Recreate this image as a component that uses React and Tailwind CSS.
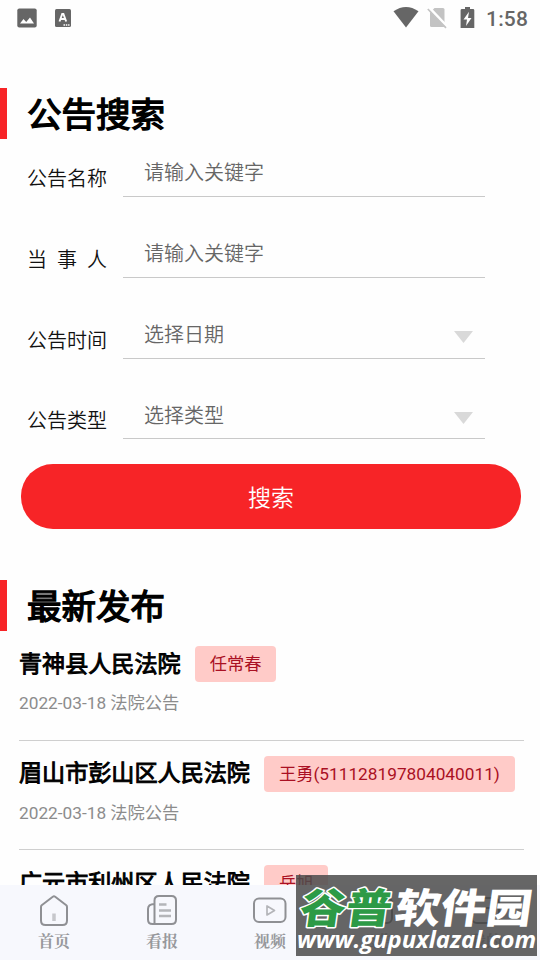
import React from 'react';

const fields = [
  { id: 'name', label: ['公告名称'], placeholder: '请输入关键字', height: 'h-[58px]', pad: 'pt-[2px]', select: false },
  { id: 'party', label: ['当', '事', '人'], placeholder: '请输入关键字', height: 'h-[81px]', pad: 'pt-[2px]', select: false },
  { id: 'time', label: ['公告时间'], placeholder: '选择日期', height: 'h-[81px]', pad: 'pt-[2px]', select: true },
  { id: 'type', label: ['公告类型'], placeholder: '选择类型', height: 'h-[80px]', pad: 'pt-[4px]', select: true },
];

const notices = [
  { court: '青神县人民法院', person: '任常春', date: '2022-03-18' },
  { court: '眉山市彭山区人民法院', person: '王勇(511128197804040011)', date: '2022-03-18' },
  { court: '广元市利州区人民法院', person: '岳旭', date: '2022-03-18' },
];

const HomeIcon = () => (
  <svg width="36" height="36" viewBox="0 0 36 36" fill="none" stroke="#8f9094" strokeWidth="2" strokeLinejoin="round">
    <path d="M16.8 3.800 5.700 12.200Q5 12.800 5 14v13.500Q5 32 9.500 32h17Q31 32 31 27.500V14q0-1.200-.7-1.800L19.200 3.800Q18 2.900 16.800 3.800Z" />
    <path d="M18 20.500V28" stroke="#c6c7cb" strokeWidth="3.500" />
  </svg>
);

const PaperIcon = () => (
  <svg width="36" height="36" viewBox="0 0 36 36" fill="none" stroke="#8f9094" strokeWidth="2">
    <path d="M10.500 31V7.500Q10.500 3 15 3h12.500Q32 3 32 7.500v19Q32 31 27.500 31H8.500Q4 31 4 26.500V16Q4 11 10.500 11" />
    <path d="M15 11.500h7.500M15 17.500h12M15 23h12" stroke="#b4b5b9" strokeWidth="2.300" />
  </svg>
);

const VideoIcon = () => (
  <svg width="36" height="36" viewBox="0 0 36 36" fill="none" stroke="#8f9094" strokeWidth="2">
    <rect x="2" y="5.500" width="31.500" height="23.500" rx="5" />
    <path d="M15 13v9l7.500-4.500z" stroke="#b4b5b9" strokeWidth="1.700" strokeLinejoin="round" />
  </svg>
);

const NoticeIcon = () => (
  <svg width="36" height="36" viewBox="0 0 36 36" fill="none" stroke="#55565a" strokeWidth="2">
    <rect x="5" y="5" width="27" height="25" rx="5" />
    <path d="M12 12h11M12 19h11" stroke="#e8332a" strokeWidth="2.500" />
  </svg>
);

const MineIcon = () => (
  <svg width="36" height="36" viewBox="0 0 36 36" fill="none" stroke="#55565a" strokeWidth="2">
    <rect x="4" y="5" width="27" height="25" rx="5" />
    <path d="M13 15h11" />
  </svg>
);

const tabs = [
  { id: 'home', label: '首页', icon: HomeIcon },
  { id: 'paper', label: '看报', icon: PaperIcon },
  { id: 'video', label: '视频', icon: VideoIcon },
  { id: 'notice', label: '公告', icon: NoticeIcon },
  { id: 'mine', label: '我的', icon: MineIcon },
];

const StatusBar = () => (
  <div className="flex h-9 shrink-0 items-center pl-[17px] pr-[12px] text-[#666]">
    <svg width="20" height="20" viewBox="0 0 20 20">
      <rect x=".3" y=".5" width="19.400" height="19" rx="2" fill="#666" />
      <path d="M3 15.500 6.500 11l2.700 3L13 9.500l4 6z" fill="#fff" />
    </svg>
    <svg className="ml-[18px]" width="16" height="18" viewBox="0 0 16 18">
      <rect width="16" height="18" rx="1.500" fill="#666" />
      <path d="M4.500 12.500 7.200 5h1.200l2.800 7.500M5.800 10h4" fill="none" stroke="#fff" strokeWidth="1.900" />
      <path d="M8.500 16h6" stroke="#fff" strokeWidth="1.300" strokeDasharray="1.500 .8" />
    </svg>
    <svg className="mb-[2px] ml-auto" width="26" height="22" viewBox="0 0 26 22">
      <path d="M.5 5.300Q13-3.300 25.500 5.300L13 21.500z" fill="#666" />
    </svg>
    <svg className="ml-[8px]" width="21" height="22" viewBox="0 0 21 22">
      <path d="M7.500 1H16q1.500 0 1.500 1.500V20H4.500Q3 20 3 18.500V5.500z" fill="#c3c3c3" />
      <path d="M1.500.5 20 20" stroke="#fff" strokeWidth="3.500" />
      <path d="M.8 2 19 20.800" stroke="#c3c3c3" strokeWidth="1.700" />
    </svg>
    <svg className="mb-[2px] ml-[12px]" width="15" height="23" viewBox="0 0 15 23">
      <path d="M5 1h5v2h3q1.300 0 1.300 1.300V22H.6V4.300Q.6 3 2 3h3z" fill="#666" />
      <path d="M9 5.800 3.500 13.500H7L6 20l5.500-8H8z" fill="#fff" />
    </svg>
    <span className="ml-[11px] w-[42px] whitespace-nowrap pt-[2px] text-[21px] font-medium leading-none tracking-[0.2px]">1:58</span>
  </div>
);

const SectionTitle = ({ children }) => (
  <div className="flex h-[51px] shrink-0 items-center">
    <div className="h-full w-[7px] bg-[#f72427]" />
    <h2 className="ml-5 pt-[4px] text-[34.5px] font-normal leading-none text-black [-webkit-text-stroke:1.4px_#000]">{children}</h2>
  </div>
);

const Field = ({ field }) => (
  <div className={`flex items-end pl-[27px] ${field.height}`}>
    <div className="flex h-[38px] w-[80px] items-center justify-between pt-[2px] text-[20px] font-[350] leading-none text-[#111]">
      {field.label.map((part) => (
        <span key={part}>{part}</span>
      ))}
    </div>
    <div className={`ml-4 flex h-[50px] w-[362px] items-center justify-between border-b-[1.5px] border-[#c9c9c9] pl-[21px] pr-[12px] text-[20px] font-[350] leading-none text-[#666] ${field.pad}`}>
      <span>{field.placeholder}</span>
      {field.select && (
        <svg className="mt-[4px]" width="19" height="12" viewBox="0 0 19 12">
          <path d="M0 0h19L9.500 12z" fill="#d9d9d9" />
        </svg>
      )}
    </div>
  </div>
);

const Notice = ({ notice }) => (
  <div className="ml-[19px] mr-[16px] h-[109.5px] shrink-0 border-b-[1.5px] border-[#cfcfcf] pt-[15px]">
    <div className="flex items-center">
      <h3 className="whitespace-nowrap pt-px text-[23.1px] font-normal leading-none text-black [-webkit-text-stroke:0.95px_#000]">{notice.court}</h3>
      <span className="ml-[14px] flex h-9 items-center whitespace-nowrap rounded-[4px] bg-[#ffcbc8] px-[15px] pt-[2px] text-[17.25px] leading-none text-[#aa1023]">
        {notice.person}
      </span>
    </div>
    <p className="mt-[12px] text-[17.25px] leading-[19px] text-[#8c8c8c]">{notice.date} 法院公告</p>
  </div>
);

const TabBar = () => (
  <nav className="grid h-[75px] shrink-0 grid-cols-5 bg-[#f7f8fd]">
    {tabs.map((tab) => (
      <button key={tab.id} className="flex flex-col items-center pt-[8px]">
        <tab.icon />
        <span className="mt-[3px] font-['Noto_Serif_CJK_SC','Noto_Sans_CJK_SC',serif] text-[16px] font-bold leading-[18px] text-[#97989c]">
          {tab.label}
        </span>
      </button>
    ))}
  </nav>
);

const Watermark = () => (
  <div className="absolute left-[296px] top-[875px] h-[81px] w-[241px] overflow-hidden bg-[#4b4b4b]/85">
    <svg width="241" height="81" viewBox="0 0 241 81">
      <g fontFamily="'Noto Sans CJK SC', sans-serif" fontWeight="900" fontSize="41" strokeLinejoin="round" transform="skewX(-8)">
        <text x="9" y="48" textLength="92" lengthAdjust="spacingAndGlyphs" fill="#2d9a46" stroke="#fff" strokeWidth="3" paintOrder="stroke">谷普</text>
        <text x="104" y="48" textLength="137" lengthAdjust="spacingAndGlyphs" fill="#fff">软件园</text>
      </g>
      <text x="1" y="73" textLength="239" lengthAdjust="spacingAndGlyphs" fontFamily="'Open Sans', 'Noto Sans', sans-serif" fontWeight="700" fontStyle="italic" fontSize="24" fill="#fff">
        www.gupuxlazal.com
      </text>
    </svg>
  </div>
);

export default function App() {
  return (
    <div className="relative flex h-[960px] w-[540px] flex-col overflow-hidden bg-[#fefefe] font-[Roboto,'Noto_Sans_CJK_SC',sans-serif]">
      <StatusBar />
      <main className="flex min-h-0 flex-1 flex-col overflow-hidden pt-[52px]">
        {/* Search form */}
        <SectionTitle>公告搜索</SectionTitle>
        <div className="shrink-0">
          {fields.map((field) => (
            <Field key={field.id} field={field} />
          ))}
        </div>
        <button className="ml-[21px] mt-[25px] h-[65px] w-[500px] shrink-0 rounded-[32px] bg-[#f72427] pt-[3px] text-[23px] font-[350] leading-none text-white">
          搜索
        </button>

        {/* Latest notices */}
        <div className="mt-[51px] shrink-0">
          <SectionTitle>最新发布</SectionTitle>
        </div>
        {notices.map((notice) => (
          <Notice key={notice.court} notice={notice} />
        ))}
      </main>
      <TabBar />
      <Watermark />
    </div>
  );
}
